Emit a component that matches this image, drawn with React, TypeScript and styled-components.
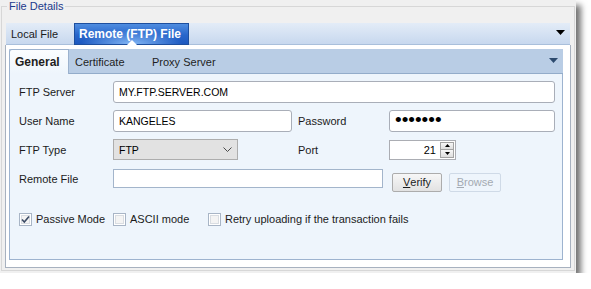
import styled, { createGlobalStyle } from "styled-components";

const GlobalStyle = createGlobalStyle`
  html, body {
    margin: 0;
    padding: 0;
    background: #ffffff;
  }
  body {
    font-family: "Liberation Sans", Arial, sans-serif;
    font-size: 11px;
    color: #1b1b1b;
  }
`;

const Window = styled.div`
    box-sizing: border-box;
    width: 576px;
    height: 273px;
    padding: 0 1px 2px 1px;
    background: #f0f0f0;
    box-shadow: 5px 5px 6px rgba(0, 0, 0, 0.55);
`;

const GroupBox = styled.fieldset`
    box-sizing: border-box;
    height: 100%;
    margin: 0;
    min-width: 0;
    padding: 10px 3px 2px 3px;
    border: 1px solid #d7d7d7;
    display: flex;
    flex-direction: column;
`;

const Caption = styled.legend`
    margin-left: 2px;
    padding: 0 2px;
    font-size: 11px;
    line-height: 13px;
    color: #1c3a8c;
`;

const TabControl = styled.div`
    flex: 1;
    display: flex;
    flex-direction: column;
    min-height: 0;
`;

const OuterStrip = styled.div`
    display: flex;
    align-items: stretch;
    height: 22px;
    margin: 0 1px;
    background: linear-gradient(#e3ecf7, #c6d7ee);
    box-shadow: inset 0 -1px 0 #a9bfdb;
`;

const OuterTab = styled.div<{ $active?: boolean; $width: number }>`
    position: relative;
    box-sizing: border-box;
    display: flex;
    align-items: center;
    width: ${p => p.$width}px;
    padding-left: ${p => (p.$active ? 4 : 5)}px;
    font-size: ${p => (p.$active ? 12 : 11)}px;
    font-weight: ${p => (p.$active ? 700 : 400)};
    color: ${p => (p.$active ? "#ffffff" : "#1b1b1b")};
    border: ${p => (p.$active ? "1px solid #1d4f9f" : "none")};
    background: ${p =>
        p.$active
            ? "radial-gradient(ellipse 45% 70% at 50% 100%, rgba(150, 200, 255, 0.85), rgba(150, 200, 255, 0) 100%), linear-gradient(#4f8de0, #2866cb 55%, #1c58bf)"
            : "transparent"};
`;

const Pointer = styled.span`
    position: absolute;
    left: 50%;
    bottom: -1px;
    margin-left: -5px;
    width: 0;
    height: 0;
    border-left: 5px solid transparent;
    border-right: 5px solid transparent;
    border-bottom: 5px solid #ffffff;
`;

const StripArrow = styled.svg<{ $right: number; $top: number }>`
    margin-left: auto;
    margin-right: ${p => p.$right}px;
    margin-top: ${p => p.$top}px;
`;

const OuterBody = styled.div`
    flex: 1;
    display: flex;
    flex-direction: column;
    padding: 4px 7px 7px 3px;
    background: #ffffff;
    border: 1px solid #a7b1bf;
    border-top: none;
`;

const InnerStrip = styled.div`
    display: flex;
    align-items: stretch;
    height: 25px;
    background: #b9cde5;
    box-shadow: inset 0 -1px 0 #93acca;
`;

const InnerTab = styled.div<{ $active?: boolean; $width?: number; $pad: number }>`
    box-sizing: border-box;
    display: flex;
    align-items: center;
    width: ${p => (p.$width ? `${p.$width}px` : "auto")};
    padding-left: ${p => p.$pad}px;
    font-size: ${p => (p.$active ? 12 : 11)}px;
    font-weight: ${p => (p.$active ? 700 : 400)};
    color: #1e1e1e;
    border: ${p => (p.$active ? "1px solid #9cb2ce" : "none")};
    border-bottom: none;
    border-top-left-radius: ${p => (p.$active ? 3 : 0)}px;
    background: ${p => (p.$active ? "linear-gradient(#fbfdff, #eef5fc)" : "transparent")};
`;

const InnerBody = styled.div`
    flex: 1;
    padding: 3px 0 0 9px;
    background: #eef5fc;
    border: 1px solid #9db3cf;
    border-top: none;
`;

const Row = styled.div`
    display: flex;
    align-items: center;
    height: 29px;
`;

const Label = styled.span<{ $width: number; $gap?: number }>`
    width: ${p => p.$width}px;
    margin-left: ${p => p.$gap || 0}px;
    font-size: 11px;
    color: #1b1b1b;
`;

const TextBox = styled.div<{ $width: number }>`
    box-sizing: border-box;
    display: flex;
    align-items: center;
    width: ${p => p.$width}px;
    height: 22px;
    padding: 0 5px;
    background: #ffffff;
    border: 1px solid #a9aeb8;
    border-radius: 3px;
    font-size: 10.5px;
    color: #000000;
`;

const Bullets = styled.span`
    font-family: "Liberation Sans", Arial, sans-serif;
    font-size: 19px;
    line-height: 14px;
    color: #000000;
    margin-top: -1px;
`;

const Combo = styled.div`
    box-sizing: border-box;
    display: flex;
    align-items: center;
    justify-content: space-between;
    width: 125px;
    height: 21px;
    padding: 0 5px;
    background: #e2e2e2;
    border: 1px solid #adadad;
    font-size: 10.5px;
    color: #000000;
`;

const Spin = styled.div`
    box-sizing: border-box;
    display: flex;
    align-items: stretch;
    width: 67px;
    height: 20px;
    background: #ffffff;
    border: 1px solid #abadb3;
`;

const SpinValue = styled.span`
    flex: 1;
    display: flex;
    align-items: center;
    justify-content: flex-end;
    padding-right: 4px;
    font-size: 11px;
    color: #000000;
`;

const SpinButtons = styled.div`
    display: flex;
    flex-direction: column;
    width: 14px;
    padding: 1px 1px 1px 0;
`;

const SpinButton = styled.div`
    flex: 1;
    display: flex;
    align-items: center;
    justify-content: center;
    border: 1px solid #a3a3a3;
    background: linear-gradient(#f7f7f7, #dedede);
    & + & {
        border-top: none;
    }
`;

const FileBox = styled.div`
    box-sizing: border-box;
    width: 270px;
    height: 19px;
    background: #ffffff;
    border: 1px solid #a3b5cb;
`;

const Button = styled.div<{ $disabled?: boolean; $gap: number; $width: number }>`
    box-sizing: border-box;
    display: flex;
    align-items: center;
    justify-content: center;
    width: ${p => p.$width}px;
    height: 19px;
    margin-left: ${p => p.$gap}px;
    margin-top: 7px;
    font-size: 11px;
    border-radius: 2px;
    color: ${p => (p.$disabled ? "#a4aab2" : "#1b1b1b")};
    border: 1px solid ${p => (p.$disabled ? "#cfdae7" : "#acacac")};
    background: ${p => (p.$disabled ? "transparent" : "linear-gradient(#f7f7f7, #e2e2e2)")};
`;

const CheckRow = styled.div`
    display: flex;
    align-items: center;
    height: 16px;
    margin-top: 18px;
`;

const CheckItem = styled.label<{ $width?: number }>`
    display: flex;
    align-items: center;
    width: ${p => (p.$width ? `${p.$width}px` : "auto")};
    font-size: 11px;
    color: #1b1b1b;
`;

const Box = styled.span`
    box-sizing: border-box;
    display: flex;
    align-items: center;
    justify-content: center;
    width: 13px;
    height: 13px;
    margin-right: 4px;
    border: 1px solid #a8b5c6;
    background: #f4f4f4;
    box-shadow: inset 0 0 0 1px #ffffff, inset 0 0 0 2px #d9dde2;
`;

const DownArrow = ({ color, right, top }: { color: string; right: number; top: number }) => (
    <StripArrow $right={right} $top={top} width="9" height="5" viewBox="0 0 9 5">
        <path d="M0 0 H9 L4.5 5 Z" fill={color} />
    </StripArrow>
);

const Check = ({ label, checked, width }: { label: string; checked?: boolean; width?: number }) => (
    <CheckItem $width={width}>
        <Box>
            {checked && (
                <svg width="11" height="11" viewBox="0 0 11 11">
                    <path d="M2 5.5 L4.3 8 L9 2.5" fill="none" stroke="#3c4c66" strokeWidth="1.6" />
                </svg>
            )}
        </Box>
        {label}
    </CheckItem>
);

const App = () => {
    return (
        <>
            <GlobalStyle />
            <Window>
                <GroupBox>
                    <Caption>File Details</Caption>
                    <TabControl>
                        <OuterStrip>
                            <OuterTab $width={68}>Local File</OuterTab>
                            <OuterTab $active $width={115}>
                                Remote (FTP) File
                                <Pointer />
                            </OuterTab>
                            <DownArrow color="#000000" right={5} top={7} />
                        </OuterStrip>
                        <OuterBody>
                            <InnerStrip>
                                <InnerTab $active $width={60} $pad={5}>General</InnerTab>
                                <InnerTab $width={76} $pad={6}>Certificate</InnerTab>
                                <InnerTab $pad={7}>Proxy Server</InnerTab>
                                <DownArrow color="#2c4a6e" right={5} top={9} />
                            </InnerStrip>
                            <InnerBody>
                                <Row>
                                    <Label $width={94}>FTP Server</Label>
                                    <TextBox $width={442}>MY.FTP.SERVER.COM</TextBox>
                                </Row>
                                <Row>
                                    <Label $width={94}>User Name</Label>
                                    <TextBox $width={179}>KANGELES</TextBox>
                                    <Label $width={91} $gap={6}>Password</Label>
                                    <TextBox $width={166}>
                                        <Bullets>•••••••</Bullets>
                                    </TextBox>
                                </Row>
                                <Row>
                                    <Label $width={94}>FTP Type</Label>
                                    <Combo>
                                        FTP
                                        <svg width="9" height="5" viewBox="0 0 9 5">
                                            <path d="M0.5 0.5 L4.5 4.5 L8.5 0.5" fill="none" stroke="#4a4a4a" strokeWidth="1" />
                                        </svg>
                                    </Combo>
                                    <Label $width={91} $gap={60}>Port</Label>
                                    <Spin>
                                        <SpinValue>21</SpinValue>
                                        <SpinButtons>
                                            <SpinButton>
                                                <svg width="5" height="3" viewBox="0 0 5 3">
                                                    <path d="M0 3 H5 L2.5 0 Z" fill="#000000" />
                                                </svg>
                                            </SpinButton>
                                            <SpinButton>
                                                <svg width="5" height="3" viewBox="0 0 5 3">
                                                    <path d="M0 0 H5 L2.5 3 Z" fill="#000000" />
                                                </svg>
                                            </SpinButton>
                                        </SpinButtons>
                                    </Spin>
                                </Row>
                                <Row>
                                    <Label $width={94}>Remote File</Label>
                                    <FileBox />
                                    <Button $gap={9} $width={50}>
                                        <u>V</u>erify
                                    </Button>
                                    <Button $disabled $gap={7} $width={52}>
                                        <u>B</u>rowse
                                    </Button>
                                </Row>
                                <CheckRow>
                                    <Check label="Passive Mode" checked width={94} />
                                    <Check label="ASCII mode" width={95} />
                                    <Check label="Retry uploading if the transaction fails" />
                                </CheckRow>
                            </InnerBody>
                        </OuterBody>
                    </TabControl>
                </GroupBox>
            </Window>
        </>
    );
};

export default App;
